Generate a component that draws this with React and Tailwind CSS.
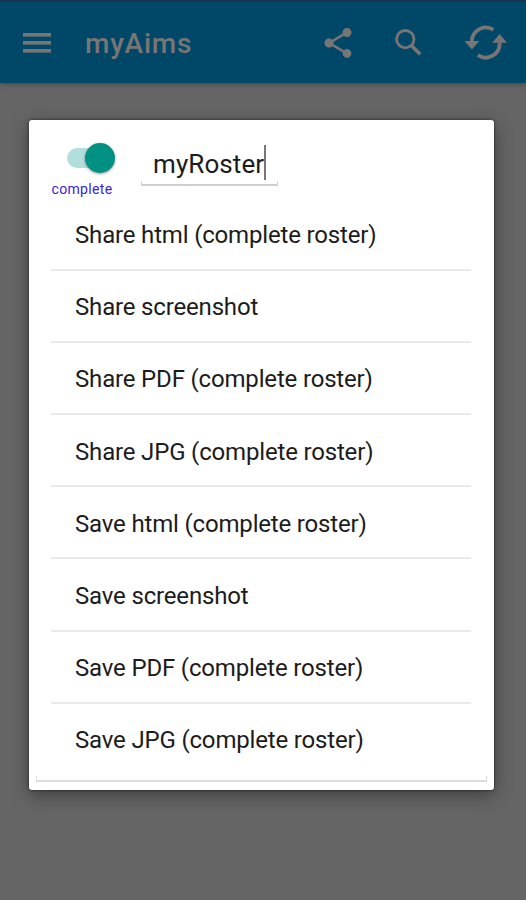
import { MdShare } from 'react-icons/md';

const ACTIONS = [
  'Share html (complete roster)',
  'Share screenshot',
  'Share PDF (complete roster)',
  'Share JPG (complete roster)',
  'Save html (complete roster)',
  'Save screenshot',
  'Save PDF (complete roster)',
  'Save JPG (complete roster)',
];

function MenuIcon() {
  return (
    <svg width="28" height="20" viewBox="0 0 28 20" fill="currentColor">
      <rect y="0" width="28" height="3.6" />
      <rect y="8" width="28" height="3.6" />
      <rect y="16" width="28" height="3.6" />
    </svg>
  );
}

function SearchIcon() {
  return (
    <svg width="28" height="28" viewBox="0 0 28 28" fill="none" stroke="currentColor">
      <circle cx="10.3" cy="10.2" r="8.7" strokeWidth="2.8" />
      <path d="M16.4 16.4 L25.2 25.2" strokeWidth="3.6" />
    </svg>
  );
}

function SyncIcon() {
  return (
    <svg width="44" height="36" viewBox="0 0 44 36" fill="none" stroke="currentColor" strokeWidth="3.8">
      <path d="M29.3 4.8 A14 14 0 0 0 7.8 17" />
      <path d="M13.9 30.2 A14 14 0 0 0 35.6 17.5" />
      <path d="M0.5 16 H15.3 L7.9 24.5 Z" fill="currentColor" stroke="none" />
      <path d="M28.2 17.8 H43 L35.6 9 Z" fill="currentColor" stroke="none" />
    </svg>
  );
}

function Toolbar() {
  return (
    <header className="flex h-[83px] items-center border-t-2 border-[#1a344d] bg-[#004768] pl-[23px] text-[#777675] shadow-[0_1px_5px_rgba(0,0,0,0.35)]">
      <MenuIcon />
      <h1 className="ml-[34px] w-[235px] pt-[3px] text-[28px] font-medium tracking-[0.75px]">myAims</h1>
      <MdShare className="h-9 w-9" />
      <div className="ml-[39px]">
        <SearchIcon />
      </div>
      <div className="ml-[41px]">
        <SyncIcon />
      </div>
    </header>
  );
}

function Switch() {
  return (
    <div className="flex w-[62px] flex-col items-center">
      <div className="ml-[18px] flex h-[30px] w-[48px] items-center">
        <div className="h-5 w-[36px] rounded-full bg-[#b2dfdb]" />
        <div className="-ml-[18px] h-[30px] w-[30px] shrink-0 rounded-full bg-[#009182] shadow-[0_1px_3px_rgba(0,0,0,0.4)]" />
      </div>
      <span className="mt-[7px] text-[14px] leading-[18px] tracking-[0.35px] text-[#3a22dd]">complete</span>
    </div>
  );
}

export default function App() {
  return (
    <div className="h-[900px] w-[526px] overflow-hidden bg-[#656565] font-[Roboto,sans-serif]">
      <Toolbar />
      <main className="ml-[28.5px] mt-[37px] h-[670px] w-[465.5px] rounded-[3px] bg-white shadow-[0_5px_18px_rgba(0,0,0,0.4),0_0_3px_rgba(0,0,0,0.6)]">
        <div className="flex h-[78.5px] pl-[22.5px] pt-[23px]">
          <Switch />
          <div className="ml-[28px] flex h-[43px] w-[137px] flex-col">
            <div className="flex h-[38px] items-center pl-[12px]">
              <span className="pt-[4px] text-[26px] tracking-[0.1px] text-[#1c1c1c]">myRoster</span>
              <span className="h-[35px] w-[2px] bg-[#777]" />
            </div>
            <div className="h-[5px] border-x border-b-2 border-[#d0d0d0]" />
          </div>
        </div>
        <ul className="mx-[22.5px] w-[420px]">
          {ACTIONS.map((label) => (
            <li
              key={label}
              className="flex h-[72.2px] items-center border-b-2 border-[#e9e9e9] pl-6 pt-[3px] text-[24px] tracking-[-0.17px] text-[#1c1c1c] last:border-transparent"
            >
              {label}
            </li>
          ))}
        </ul>
        <div className="mx-[7.5px] h-[6px] border-x border-b-2 border-[#dcdcdc]" />
      </main>
    </div>
  );
}
